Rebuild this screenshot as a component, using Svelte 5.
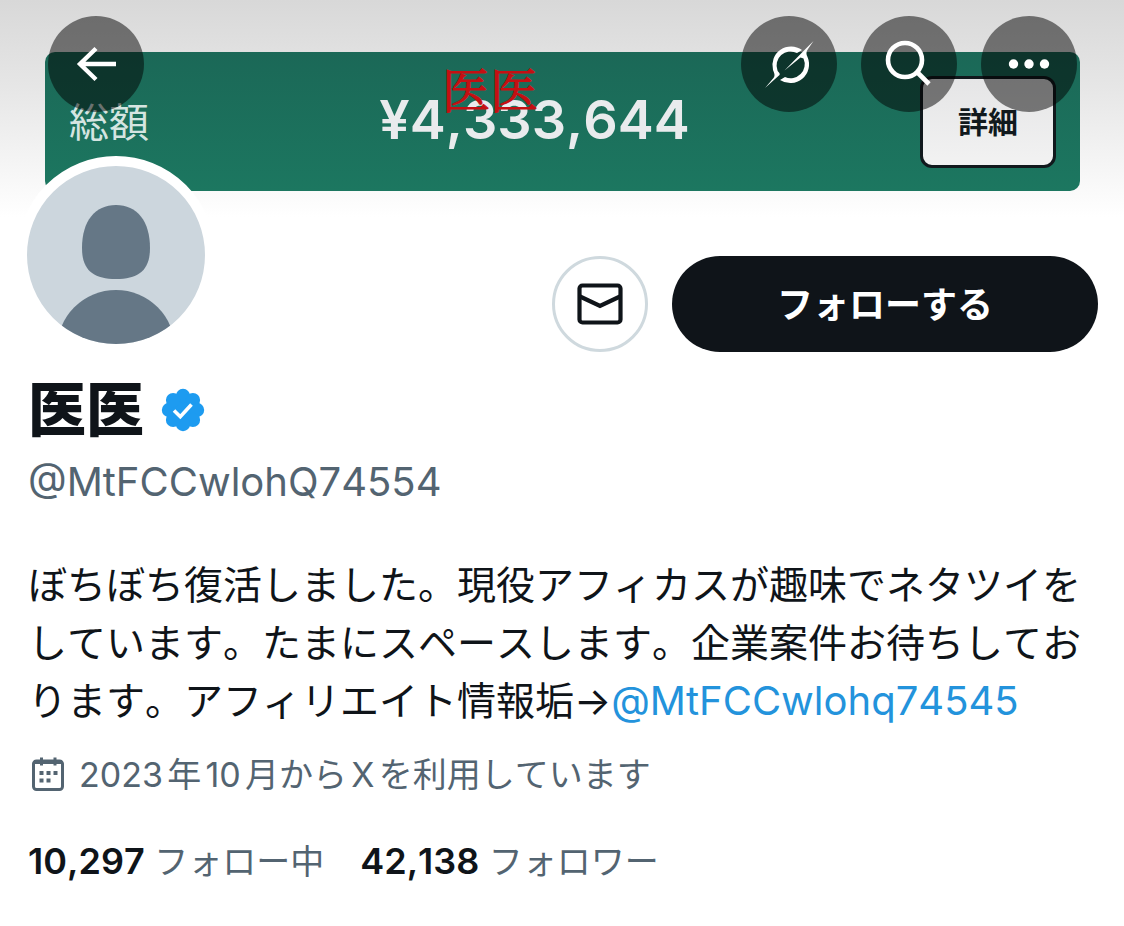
<script>
  const total = "¥4,333,644";
  const profile = {
    name: "医医",
    handle: "@MtFCCwlohQ74554",
    mention: "@MtFCCwlohq74545",
    joined: "2023年10月からXを利用しています"
  };
  const stats = [
    { count: "10,297", label: "フォロー中" },
    { count: "42,138", label: "フォロワー" }
  ];
  let following = $state(false);
</script>

<div class="profile">
  <header class="banner">
    <div class="total">
      <span class="total-label">総額</span>
      <strong class="amount">{total}</strong>
      <button type="button" class="details">詳細</button>
      <span class="stamp">{profile.name}</span>
    </div>
    <nav class="toolbar">
      <button type="button" class="round back" aria-label="戻る">
        <svg viewBox="0 0 96 96">
          <path d="M68 48H33M48 32.5 32 48l16 15.5" fill="none" stroke="#fff" stroke-width="4.4" />
        </svg>
      </button>
      <button type="button" class="round" aria-label="Grok">
        <svg viewBox="0 0 96 96" fill="#fff">
          <path d="M24 72 32.5 62C34.5 59 33 57 32 54A18.7 18.7 0 0 1 61 34L56 37A14 14 0 0 0 36.5 54.5C37.3 56.5 39.5 57.3 38.5 59Z" />
          <path d="M72.500 25 67 33C65 36 65 38 66.500 41A18.700 18.700 0 0 1 39 64L44 61A14 14 0 0 0 62.500 42.500L59.500 41.500 43.500 54.500 61 36.500Z" />
        </svg>
      </button>
      <button type="button" class="round" aria-label="検索">
        <svg viewBox="0 0 96 96" fill="none" stroke="#fff" stroke-width="4.6">
          <circle cx="44" cy="44" r="17" />
          <path d="m56 56 12 12" />
        </svg>
      </button>
      <button type="button" class="round" aria-label="その他">
        <svg viewBox="0 0 96 96" fill="#fff">
          <circle cx="32.5" cy="48" r="4.7" />
          <circle cx="48" cy="48" r="4.7" />
          <circle cx="63.5" cy="48" r="4.7" />
        </svg>
      </button>
    </nav>
  </header>

  <main>
    <div class="top">
      <div class="avatar">
        <svg viewBox="0 0 178 178">
          <path d="M89 39c21 0 34 16 34 43 0 22-11 31-34 31s-34-9-34-31c0-27 13-43 34-43Z" fill="#657786" />
          <circle cx="89" cy="183" r="59" fill="#657786" />
        </svg>
      </div>
      <div class="actions">
        <button type="button" class="message" aria-label="メッセージ">
          <svg viewBox="0 0 48 42" fill="none" stroke="#0f1419" stroke-width="4.2">
            <rect x="3.5" y="2.5" width="41" height="37" rx="3" />
            <path d="m4 13.5 20 9.5 20-9.5" />
          </svg>
        </button>
        <button type="button" class="follow" onclick={() => (following = !following)}>
          {following ? "フォロー中" : "フォローする"}
        </button>
      </div>
    </div>

    <div class="name">
      <h1>{profile.name}</h1>
      <svg class="badge" viewBox="0 0 44 44" fill="#1d9bf0" role="img" aria-label="認証済み">
        <circle cx="22" cy="22" r="16" />
        {#each [0, 45, 90, 135, 180, 225, 270, 315] as angle}
          <circle cx="22" cy="8" r="7.2" transform="rotate({angle} 22 22)" />
        {/each}
        <path d="m13 22.5 6.3 6.2L30.5 16.5" fill="none" stroke="#fff" stroke-width="3.6" />
      </svg>
    </div>
    <p class="handle">{profile.handle}</p>

    <p class="bio">ぼちぼち復活しました。現役アフィカスが趣味でネタツイをしています。たまにスペースします。企業案件お待ちしております。アフィリエイト情報垢→<a href="#mention">{profile.mention}</a></p>

    <p class="joined">
      <svg viewBox="0 0 34 36" fill="none" stroke="#536471" stroke-width="3">
        <rect x="2.5" y="4" width="29" height="28.5" rx="3" />
        <path d="M3 5h28" stroke-width="4" />
        <path d="M10.5 .5v8M24 .5v8" />
        <path d="M8.5 16h4M15.5 16h4M22.5 16h4M8.5 23.5h4M15.5 23.5h4" stroke-width="4" />
      </svg>
      {profile.joined}
    </p>

    <div class="stats">
      {#each stats as stat}
        <a href="#stats"><strong>{stat.count}</strong> {stat.label}</a>
      {/each}
    </div>
  </main>
</div>

<style>
  :global(body) {
    margin: 0;
    background: #fff;
  }
  .profile {
    font-family: Inter, "Noto Sans CJK JP", sans-serif;
    font-kerning: none;
    color: #0f1419;
  }
  button {
    font-family: inherit;
    font-kerning: none;
    padding: 0;
    border: none;
    cursor: pointer;
  }
  h1,
  p {
    margin: 0;
  }
  a {
    color: inherit;
    text-decoration: none;
  }
  svg {
    display: block;
    flex: none;
  }
  .banner {
    position: relative;
    padding: 52px 44px 26px 45px;
    background: linear-gradient(#d8d8d8, #e6e6e6 40%, #fff);
  }
  .total {
    position: relative;
    display: flex;
    align-items: center;
    justify-content: space-between;
    height: 139px;
    padding: 0 24px;
    box-sizing: border-box;
    border-radius: 10px;
    background: linear-gradient(#1b6857, #1c7760);
  }
  .total-label,
  .amount {
    padding-bottom: 4px;
  }
  .total-label {
    font-size: 40px;
    color: #d5e5e1;
  }
  .amount {
    font-size: 54px;
    font-weight: 600;
    color: #e9ebed;
  }
  .details {
    width: 136px;
    height: 92px;
    padding-bottom: 4px;
    border: 3px solid #11191d;
    border-radius: 12px;
    background: linear-gradient(#e5e5e6, #f2f2f2);
    color: #11191d;
    font-size: 30px;
    font-weight: 700;
  }
  .stamp {
    position: absolute;
    top: 12px;
    left: 397px;
    font-family: "Noto Serif CJK JP", "Liberation Serif", serif;
    font-size: 48px;
    line-height: 48px;
    color: #c50f12;
    -webkit-text-stroke: 1px #c50f12;
  }
  .toolbar {
    position: absolute;
    top: 16px;
    left: 48px;
    right: 47px;
    display: flex;
    gap: 24px;
  }
  .round {
    width: 96px;
    height: 96px;
    border-radius: 50%;
    background: rgba(0, 0, 0, 0.5);
  }
  .back {
    margin-right: auto;
  }
  main {
    padding: 0 28px;
  }
  .top {
    display: flex;
    justify-content: space-between;
    align-items: flex-end;
    margin: -61px -2px 0 -11px;
    position: relative;
  }
  .avatar {
    width: 178px;
    height: 178px;
    border: 10px solid #fff;
    border-radius: 50%;
    background: #ccd6dd;
    overflow: hidden;
  }
  .actions {
    display: flex;
    gap: 24px;
    margin-bottom: 2px;
  }
  .message {
    display: flex;
    align-items: center;
    justify-content: center;
    width: 96px;
    height: 96px;
    border: 3px solid #cfd9de;
    border-radius: 50%;
    background: #fff;
  }
  .message svg {
    width: 48px;
    height: 42px;
  }
  .follow {
    width: 426px;
    height: 96px;
    padding-bottom: 4px;
    border-radius: 48px;
    background: #0f1419;
    color: #fff;
    font-size: 36px;
    font-weight: 700;
  }
  .name {
    display: flex;
    align-items: center;
    gap: 17px;
    margin-top: 20px;
  }
  h1 {
    font-size: 58px;
    line-height: 72px;
    font-weight: 900;
  }
  .badge {
    width: 44px;
    height: 44px;
  }
  .handle {
    margin-top: 10px;
    font-size: 40px;
    line-height: 52px;
    color: #536471;
  }
  .bio {
    margin-top: 48px;
    font-size: 39px;
    line-height: 58px;
  }
  .bio a {
    color: #2393dc;
    font-size: 40px;
  }
  .joined {
    display: flex;
    align-items: center;
    gap: 14px;
    margin-top: 20px;
    padding-left: 3px;
    font-size: 34px;
    line-height: 50px;
    text-autospace: normal;
    color: #536471;
  }
  .joined svg {
    width: 34px;
    height: 36px;
  }
  .stats {
    display: flex;
    gap: 36px;
    margin-top: 36px;
    font-size: 34px;
    line-height: 50px;
    color: #536471;
  }
  .stats strong {
    font-size: 36px;
    font-weight: 600;
    color: #0f1419;
  }
</style>
